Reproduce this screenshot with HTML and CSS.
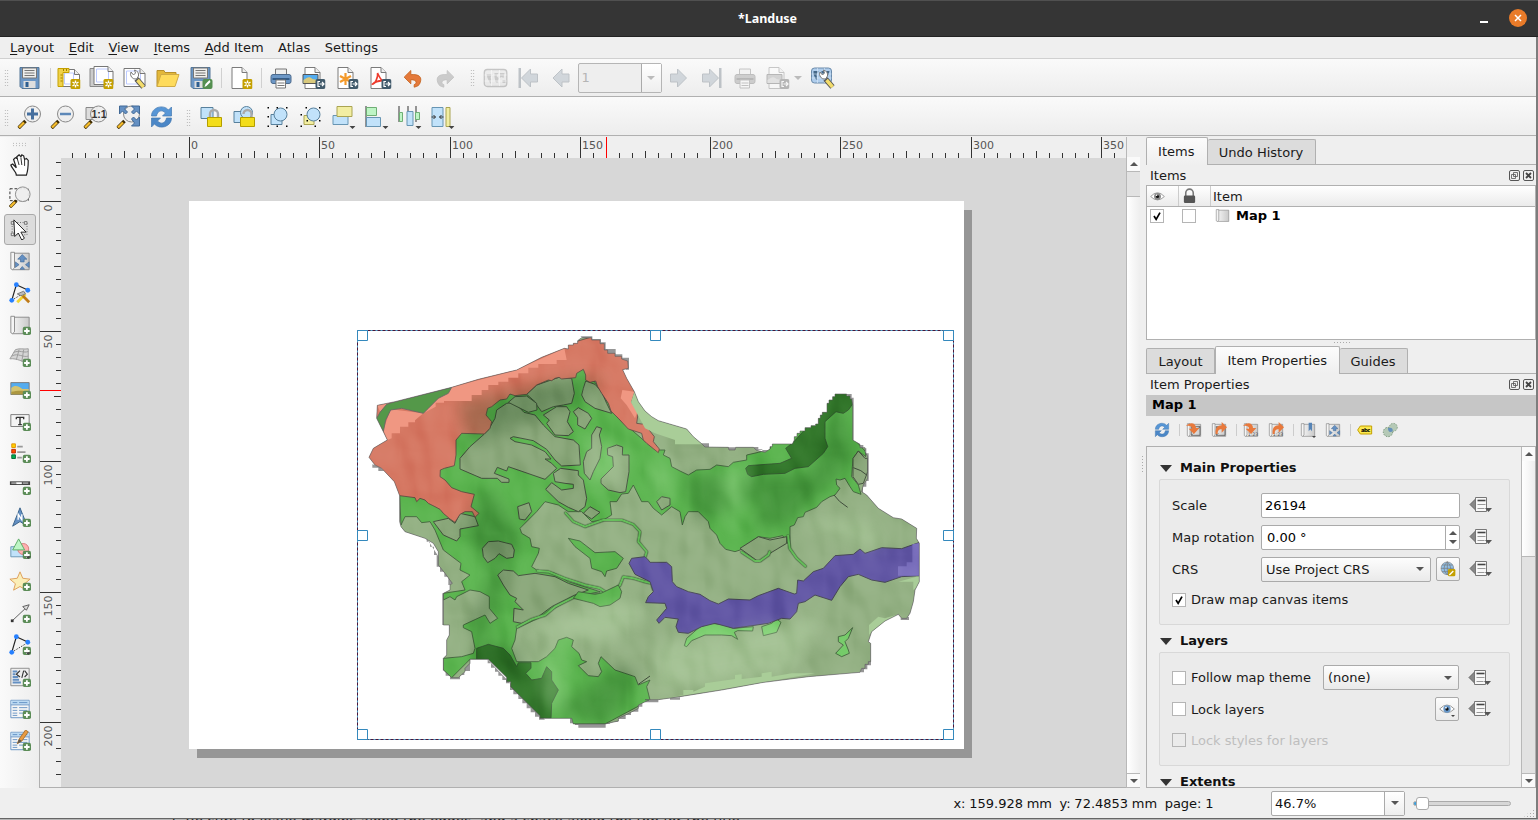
FILE: index.html
```html
<!DOCTYPE html>
<html lang="en">
<head>
<meta charset="utf-8">
<title>*Landuse</title>
<link rel="stylesheet" href="styles.css">
</head>
<body>
<svg class="defs" width="0" height="0">
  <defs>
    <linearGradient id="gray" x1="0" x2="1"><stop offset="0" stop-color="#f4f4f4"/><stop offset="1" stop-color="#c9c9c9"/></linearGradient>
    <symbol id="plus" viewBox="0 0 24 24"><rect x="15" y="14" width="9" height="9" rx="2" fill="#5b8c57"/><path d="M19.500 15.500v6M16.500 18.500h6" stroke="#fff" stroke-width="2"/></symbol>
    <symbol id="new" viewBox="0 0 24 24"><rect x="14" y="13" width="10" height="10" rx="1.500" fill="#c4a000"/><path d="M19 14.500v7M16 16l6 4M22 16l-6 4" stroke="#fff" stroke-width="1.400"/><circle cx="19" cy="18" r="1" fill="#c4a000"/></symbol>
    <symbol id="export" viewBox="0 0 24 24"><rect x="14" y="13" width="10" height="10" rx="2" fill="#415a6b"/><path d="M18.500 15.500h-2v5h2M18 18h4.500M20.500 16l2 2-2 2" fill="none" stroke="#fff" stroke-width="1.200"/></symbol>
    <symbol id="drop" viewBox="0 0 24 24"><path d="M18 21h6l-3 3z" fill="#444"/></symbol>
    <symbol id="doc" viewBox="0 0 24 24"><path d="M3.500 1.500h10l5 5v16h-15z" fill="#fff" stroke="#7b7b7b"/><path d="M13.500 1.500v5h5" fill="#eee" stroke="#7b7b7b"/></symbol>
    <symbol id="save" viewBox="0 0 24 24"><path d="M2.500 1.500h19v21h-17l-2-2z" fill="#6c97c6" stroke="#557797"/><path d="M5 2h14v10H5z" fill="#eeeeec" stroke="#777"/><path d="M7 4.500h10M7 7h10M7 9.500h10" stroke="#777"/><path d="M6 15h12v7H6z" fill="#dedede"/><path d="M8 16h3v5H8z" fill="#2d5e91"/></symbol>
    <symbol id="saveas" viewBox="0 0 24 24"><use href="#save"/><rect x="14" y="13" width="10" height="10" rx="2" fill="#548f50"/><path d="M16 21l1-3 4-4 1 2-4 4z" fill="#fff"/></symbol>
    <symbol id="newlayout" viewBox="0 0 24 24"><path d="M4 3.500h14l5 5v12H4z" fill="#fff" stroke="#777"/><path d="M18 3.500v5h5" fill="#eee" stroke="#777"/><path d="M8 7h9v11H8z" fill="#fff" stroke="#bccaff"/><path d="M1.500 2.500h11v4h-6v14h-5z" fill="#f0d24a" stroke="#c4a000"/><path d="M4 9h2M4 12h2M4 15h2M7 3v2M10 3v2" stroke="#a08000"/><use href="#new"/></symbol>
    <symbol id="duplayout" viewBox="0 0 24 24"><path d="M.5 2.500h14v18H.5z" fill="#ccc" stroke="#888"/><path d="M4.500.5h14l5 5v13h-19z" fill="#fff" stroke="#777"/><path d="M7 3h12v13H7z" fill="none" stroke="#bccaff"/><path d="M18.500.5v5h5" fill="#eee" stroke="#777"/><use href="#new"/></symbol>
    <symbol id="wrench" viewBox="0 0 24 24"><path d="M14 13l7 8" stroke="#555" stroke-width="5.500"/><path d="M15 14l6 7" stroke="#f3dc6b" stroke-width="3.500"/><path d="M8.500 6a5 5 0 0 0 5.500 7l2-3a5 5 0 0 0-4-6l1 3-2 2z" fill="#fff" stroke="#777"/></symbol>
    <symbol id="manager" viewBox="0 0 24 24"><path d="M1.500 2.500h16l5 5v13h-21z" fill="#fff" stroke="#777"/><path d="M4 5h14v13H4z" fill="none" stroke="#bccaff"/><path d="M17.500 2.500v5h5" fill="#eee" stroke="#777"/><use href="#wrench"/></symbol>
    <symbol id="folder" viewBox="0 0 24 24"><path d="M1.500 20.500V4.500h7l1 2h11v4l-3 10z" fill="#e3b83a" stroke="#b8902c"/><path d="M1.500 20.500l4-12h18l-4 12z" fill="#fedb5c" stroke="#d0ab45"/></symbol>
    <symbol id="page" viewBox="0 0 24 24"><use href="#doc"/><use href="#new"/></symbol>
    <symbol id="print" viewBox="0 0 24 24"><path d="M7 3h11v6H7z" fill="#eee" stroke="#777"/><rect x="2.500" y="8.500" width="20" height="9" rx="2" fill="#6c97c6" stroke="#4c6a8d"/><path d="M4 13h17" stroke="#345b85" stroke-width="2"/><path d="M7.500 14h9.500v8H7.500z" fill="#fff" stroke="#777"/><path d="M9 17h7M9 19.500h7" stroke="#777"/></symbol>
    <symbol id="expimg" viewBox="0 0 24 24"><use href="#doc"/><path d="M1.500 8.500h15v9h-15z" fill="#54acef" stroke="#555"/><path d="M2 14c4-3 6-4 9-1l5 1v3H2z" fill="#d9c97c"/><use href="#export"/></symbol>
    <symbol id="expsvg" viewBox="0 0 24 24"><use href="#doc"/><path d="M11 7v12M5.500 10l11 6M16.500 10l-11 6" stroke="#f49a2b" stroke-width="2.200"/><use href="#export"/></symbol>
    <symbol id="exppdf" viewBox="0 0 24 24"><use href="#doc"/><path d="M10 7c3 6 4 8 7 8s-6-2-12 3c2 1 6-7 5-11z" fill="none" stroke="#ef3b2d" stroke-width="1.600"/><use href="#export"/></symbol>
    <symbol id="undo" viewBox="0 0 24 24"><path d="M2 11l8-8v5c10-1 14 3 11 10-1 3-3 4-7 5v-3c4-2 3-6-4-6v5z" fill="#e5793a" stroke="#c4631e"/></symbol>
    <symbol id="world" viewBox="0 0 24 24"><rect x=".8" y="3.500" width="22.500" height="17" rx="3" fill="#d5dde2" stroke="#777" stroke-width="1.300"/><path d="M3 8h6l-2 4 1 1-1 5-3-6zM11 7h4l-2 3 2 2-1 5-2-1-1-5zM16 7h5l-1 5-2-1-2 1zM19 14h3v3h-3z" fill="#888"/><path d="M1 9h22M1 15h22M8 4v16M16 4v16" stroke="#fff" stroke-width=".7"/></symbol>
    <symbol id="worldset" viewBox="0 0 24 24"><rect x="1" y="2" width="20" height="15" rx="3" fill="#afcdec" stroke="#6a8aaa"/><path d="M3 5h5l-2 4 1 5-2-1-2-5zM11 5h4l-2 4-2-2zM16 5h3l-1 4-2-1z" fill="#456888"/><path d="M1 8h20M1 12h20M7 2v15M14 2v15" stroke="#dcebfa" stroke-width=".6"/><use href="#wrench" x="1"/></symbol>
    <symbol id="prev" viewBox="0 0 24 24"><path d="M3.500 12l9-9v5h7v8h-7v5z" fill="#b5bfc8" stroke="#929ba3"/></symbol>
    <symbol id="next" viewBox="0 0 24 24"><path d="M20 12l-9-9v5H4v8h7v5z" fill="#b5bfc8" stroke="#929ba3"/></symbol>
    <symbol id="first" viewBox="0 0 24 24"><path d="M2 2h2.500v20H2z" fill="#929ba3"/><path d="M5 12l9-9v5h7v8h-7v5z" fill="#b5bfc8" stroke="#929ba3"/></symbol>
    <symbol id="last" viewBox="0 0 24 24"><path d="M19.500 2H22v20h-2.500z" fill="#929ba3"/><path d="M19 12l-9-9v5H3v8h7v5z" fill="#b5bfc8" stroke="#929ba3"/></symbol>
    <symbol id="glass" viewBox="0 0 24 24"><path d="M1 23l7-7" stroke="#3d2a00" stroke-width="3.600"/><path d="M1.500 22.500l5-5" stroke="#f5bd2e" stroke-width="2.400"/><circle cx="15" cy="9" r="8" fill="#eee" fill-opacity=".92" stroke="#888"/></symbol>
    <symbol id="zoomin" viewBox="0 0 24 24"><use href="#glass"/><path d="M15 3.500v11M9.500 9h11" stroke="#456f9f" stroke-width="3"/></symbol>
    <symbol id="zoomout" viewBox="0 0 24 24"><use href="#glass"/><path d="M9.500 9h11" stroke="#5d88b8" stroke-width="2.500"/></symbol>
    <symbol id="zoom11" viewBox="0 0 24 24"><path d="M2.500 2.500h11v12h-11z" fill="#ddd" stroke="#888"/><use href="#glass"/><text x="8" y="12.500" font-size="10.500" font-weight="bold" font-family="Liberation Sans, sans-serif" fill="#333">1:1</text></symbol>
    <symbol id="zoomfull" viewBox="0 0 24 24"><use href="#glass"/><path d="M3 1h8l-3 3 3 3-2 2-3-3-3 3zM23 1h-8l3 3-3 3 2 2 3-3 3 3zM23 21h-8l3-3-3-4 2-2 3 3 3-3z" fill="#6490c3" stroke="#416996"/></symbol>
    <symbol id="refresh" viewBox="0 0 24 24"><path d="M2 11c0-9 12-12 17-6l3-3v9h-9l3-3c-4-4-8-2-9 3z" fill="#5796d6" stroke="#4378b0" stroke-width=".7"/><path d="M22 13c0 9-12 12-17 6l-3 3v-9h9l-3 3c4 4 8 2 9-3z" fill="#4b87c7" stroke="#4378b0" stroke-width=".7"/></symbol>
    <symbol id="lock" viewBox="0 0 24 24"><path d="M1.500 2.500h12v11h-12z" fill="#c1e2fa" stroke="#57809c"/><path d="M10.500 14V9a4 4 0 0 1 8 0v5" fill="none" stroke="#aaa" stroke-width="2.400"/><path d="M8 12.500h14v9H8z" fill="#f3dd19" stroke="#b49e00"/></symbol>
    <symbol id="unlock" viewBox="0 0 24 24"><path d="M1.500 6.500h11v11h-11z" fill="#c1e2fa" stroke="#57809c"/><circle cx="14" cy="7.500" r="6" fill="#c1e2fa" stroke="#57809c"/><path d="M11 9a4 4 0 0 1 8 0v4" fill="none" stroke="#aaa" stroke-width="2.400"/><path d="M8 12.500h14v9H8z" fill="#f3dd19" stroke="#b49e00"/></symbol>
    <symbol id="group" viewBox="0 0 24 24"><path d="M5.500 9.500h11v10h-11z" fill="#c1e2fa" stroke="#57809c"/><circle cx="15" cy="9.500" r="6.500" fill="#c1e2fa" stroke="#57809c"/><path d="M2 2h1.500v1.500H2zM11 2h1.500v1.500H11zM20.500 2H22v1.500h-1.500zM2 11h1.500v1.500H2zM2 20.500h1.500V22H2zM11 20.500h1.500V22H11zM20.500 20.500H22V22h-1.500z"/></symbol>
    <symbol id="ungroup" viewBox="0 0 24 24"><path d="M5.500 10.500h10v9h-10z" fill="#f2eea2" stroke="#aaa452"/><circle cx="15" cy="9.500" r="6.500" fill="#c1e2fa" stroke="#57809c"/><path d="M7 2h1.500v1.500H7zM20.500 2H22v1.500h-1.500zM2 9h1.500v1.500H2zM20.500 15H22v1.500h-1.500zM2 20.500h1.500V22H2zM16 20.500h1.500V22H16zM8 15h1.500v1.500H8z"/></symbol>
    <symbol id="raise" viewBox="0 0 24 24"><path d="M1.500 10.500h15v9h-15z" fill="#c1e2fa" stroke="#6795b3"/><path d="M5.500 1.500h15v10h-15z" fill="#f2eea2" stroke="#aaa452"/><use href="#drop"/></symbol>
    <symbol id="align" viewBox="0 0 24 24"><path d="M1.500 1v21" stroke="#333"/><path d="M2 2.500h10v8H2z" fill="#bef5c5" stroke="#6fae75"/><path d="M2 12.500h14v9H2z" fill="#c1e2fa" stroke="#6795b3"/><use href="#drop"/></symbol>
    <symbol id="distribute" viewBox="0 0 24 24"><path d="M1.500 1v16M10.500 1v20M18.500 1v16" stroke="#333"/><path d="M2 7.500h3v9H2zM18 7.500h4v7h-4z" fill="#bef5c5" stroke="#6fae75"/><path d="M9.500 6.500h6v14h-6z" fill="#c1e2fa" stroke="#6795b3"/><use href="#drop"/></symbol>
    <symbol id="resize" viewBox="0 0 24 24"><path d="M1.500 2.500h11v19h-11z" fill="#c1e2fa" stroke="#6795b3"/><path d="M15.500 2.500h4v19h-4z" fill="#f2eea2" stroke="#aaa452"/><path d="M1 12h4l-2-2M5 12l-2 2M13 12H9l2-2M9 12l2 2" fill="none" stroke="#333"/><use href="#drop"/></symbol>
    <symbol id="hand" viewBox="0 0 24 24"><path d="M8 23c0-4-5-7-6-11l2-1 4 4-3-9 2-2 2 1-.5-2L11 1l2 2 1-2 2 1 1 4 2-1 2 2c0 6 0 10-2 16z" fill="#fff" stroke="#222" stroke-width="1.300"/><path d="M9 5l2 7M13 4l1 8M17 6v7" stroke="#222"/></symbol>
    <symbol id="zoomtool" viewBox="0 0 24 24"><path d="M1 3h20v13H1z" fill="none" stroke="#222" stroke-dasharray="3 2"/><use href="#glass"/></symbol>
    <symbol id="select" viewBox="0 0 24 24"><path d="M3 4h17v14H3z" fill="none" stroke="#555" stroke-dasharray="1 2"/><path d="M2 3h3v3H2zM17 3h3v3h-3zM2 16h3v3H2z" fill="#eee" stroke="#666"/><path d="M5 1l14 14h-6l4 7-3 2-4-8-4 4z" fill="#fff" stroke="#111"/></symbol>
    <symbol id="scroll" viewBox="0 0 24 24"><path d="M4 3.500h18v18H4z" fill="url(#gray)" stroke="#888"/><path d="M2 2.500h4v17l-2 2-2-1z" fill="#f5f5f5" stroke="#888"/></symbol>
    <symbol id="movecontent" viewBox="0 0 24 24"><use href="#scroll"/><path d="M14.500 5l5 5h-3v3h-4v-3h-3zM7 13l4 3-4 3zM22 13l-4 3 4 3zM12 21h5l-2.500-3z" fill="#6490c3" stroke="#416996" stroke-width=".7"/></symbol>
    <symbol id="nodes" viewBox="0 0 24 24"><path d="M3 20L8 3l13 6" fill="none" stroke="#222" stroke-width="1.300"/><path d="M3 20l18-11" stroke="#222" stroke-dasharray="1.500 1.500"/><g fill="#2680ff"><circle cx="8" cy="3" r="2.600"/><circle cx="20.500" cy="9" r="2.600"/><circle cx="3" cy="20" r="2.600"/></g></symbol>
    <symbol id="editnodes" viewBox="0 0 24 24"><use href="#nodes"/><path d="M9 22l9-9" stroke="#f1d431" stroke-width="3"/><path d="M15 15l7 7" stroke="#c07b17" stroke-width="3"/><path d="M9 13l7-3 2 3-5 2z" fill="#bbb" stroke="#777"/></symbol>
    <symbol id="addmap" viewBox="0 0 24 24"><use href="#scroll"/><use href="#plus"/></symbol>
    <symbol id="add3d" viewBox="0 0 24 24"><path d="M1 14L7 4c5-2 9 0 14-1v15c-6 0-12-5-20-4z" fill="#d5d5d5" stroke="#999"/><path d="M3 11c7-4 12 2 18 0M5 7c7-3 11 1 16-1M11 4l-3 11M16 4l-2 13" stroke="#999" fill="none"/><use href="#plus"/></symbol>
    <symbol id="addpic" viewBox="0 0 24 24"><path d="M2 5h20v13H2z" fill="#54acef" stroke="#777"/><path d="M2.500 11c4-4 8-2 12 1h7v5.500h-19z" fill="#d4c36f"/><path d="M2.500 15c6-1 11-2 19 0v3h-19z" fill="#ac9740"/><use href="#plus"/></symbol>
    <symbol id="addlabel" viewBox="0 0 24 24"><path d="M2 5h20v13H2z" fill="#f5f5f5" stroke="#777"/><path d="M8 8h8v2M8 10V8M12 8v8M10 16h4" fill="none" stroke="#333" stroke-width="1.500"/><use href="#plus"/></symbol>
    <symbol id="addlegend" viewBox="0 0 24 24"><path d="M3 2h4v4H3z" fill="#ffd000" stroke="#e09100"/><path d="M3 8h4v4H3z" fill="#ff4c00" stroke="#b92600"/><path d="M3 14h4v4H3z" fill="#00b052" stroke="#006633"/><path d="M9 5h6M9 11h9M9 17h5" stroke="#999" stroke-width="2"/><use href="#plus"/></symbol>
    <symbol id="addscale" viewBox="0 0 24 24"><path d="M1 8h22v4H1z" fill="#444"/><path d="M2.500 10h6M15 10h6" stroke="#999" stroke-width="2"/><path d="M8 10h6" stroke="#fff" stroke-width="2"/><use href="#plus"/></symbol>
    <symbol id="addnorth" viewBox="0 0 24 24"><path d="M12 2l8 20-8-5-8 5z" fill="#6490c3" stroke="#355e85"/><path d="M10 15V9l4 6V9" fill="none" stroke="#fff" stroke-width="1.500"/><use href="#plus"/></symbol>
    <symbol id="addshape" viewBox="0 0 24 24"><path d="M2 9.500h14v11H2z" fill="#c1e2fa" stroke="#6795b3"/><circle cx="15.500" cy="12" r="6" fill="#ffb0b0" stroke="#d77979"/><path d="M10.500 1L17 13H4z" fill="#bef5c5" stroke="#58a861"/><use href="#plus"/><use href="#drop" y="-1"/></symbol>
    <symbol id="addstar" viewBox="0 0 24 24"><path d="M12 2l3 7 8 1-6 5 2 7-7-4-7 4 2-7-6-5 8-1z" fill="#fbeeb7" stroke="#dc9b54"/><use href="#plus"/></symbol>
    <symbol id="addarrow" viewBox="0 0 24 24"><path d="M3 21L20 5" stroke="#555"/><path d="M22 3l-3 6-4-4z" fill="#ddd" stroke="#555"/><path d="M2 19h3v3H2z" fill="#333"/><use href="#plus"/></symbol>
    <symbol id="addnodes" viewBox="0 0 24 24"><use href="#nodes"/><use href="#plus"/><use href="#drop" y="-1"/></symbol>
    <symbol id="addhtml" viewBox="0 0 24 24"><path d="M2 2.500h20v19H2z" fill="#eee" stroke="#888"/><path d="M4 6h5M4 9h3M4 12h6M4 15h7M4 18h9" stroke="#6490c3" stroke-width="2"/><path d="M12 5L8 9l4 3M16 5l-2 8M17 5l3 4-3 3" fill="none" stroke="#333" stroke-width="1.200"/><use href="#plus"/></symbol>
    <symbol id="addtable" viewBox="0 0 24 24"><path d="M2 2.500h20v19H2z" fill="#f6f6f6" stroke="#6490c3"/><path d="M2.500 3h19v4h-19z" fill="#bbdaf3"/><path d="M2 7.500h20M4 10.500h5M11 10.500h9M4 13.500h5M11 13.500h9M4 16.500h5M11 16.500h9M4 19h5M4 5h5M11 5h9" stroke="#6490c3"/><use href="#plus"/></symbol>
    <symbol id="addmanual" viewBox="0 0 24 24"><use href="#addtable"/><path d="M9 15l2-5 7-10 3 2-7 10z" fill="#e89b43" stroke="#aa702b"/><path d="M9 15l2-5 3 2z" fill="#555"/></symbol>
    <symbol id="eye" viewBox="0 0 24 24"><path d="M1 12Q12 0 23 12Q12 23 1 12z" fill="#fff" stroke="#999" stroke-width="1.500"/><circle cx="12" cy="12" r="5.500" fill="currentColor"/><circle cx="12" cy="12" r="2.500" fill="#111"/><circle cx="10.500" cy="10" r="1.300" fill="#fff"/></symbol>
    <symbol id="padlock" viewBox="0 0 24 24"><path d="M6 12V7a6 6 0 0 1 12 0v5" fill="none" stroke="#777" stroke-width="2.500"/><rect x="3" y="11" width="18" height="12" rx="2" fill="#555"/></symbol>
    <symbol id="viewset" viewBox="0 0 24 24"><use href="#scroll"/><path d="M8 7h13v13H8zM8 7l3 3M21 7l-3 3M8 20l3-3" fill="none" stroke="#444"/></symbol>
    <symbol id="scaleset" viewBox="0 0 24 24"><use href="#scroll"/><text x="7" y="21" font-size="7" textLength="16" fill="#555">1:23</text></symbol>
    <symbol id="downarrow" viewBox="0 0 24 24"><path d="M0 6c6-7 15-5 15 3h5l-8 9-8-8h5c0-4-4-5-9-4z" fill="#e8793c"/></symbol>
    <symbol id="uparrow" viewBox="0 0 24 24"><path d="M7 18C6 9 10 5 16 5V0l8 8-8 8v-5c-5 0-6 3-6 7z" fill="#e8793c"/></symbol>
    <symbol id="bookmark" viewBox="0 0 24 24"><use href="#scroll"/><path d="M13 1h5v13l-2.500-3-2.500 3z" fill="#5684b6"/><use href="#drop"/></symbol>
    <symbol id="abc" viewBox="0 0 24 24"><path d="M1 12l4-6h17v12H5z" fill="#fce94f" stroke="#c4a000" stroke-width="1.500"/><text x="6" y="15" font-size="8" font-weight="bold" textLength="14">abc</text></symbol>
    <symbol id="clip" viewBox="0 0 24 24"><circle cx="9" cy="15" r="7" fill="#b5c9b6" stroke="#6c8c6e" stroke-width="1.500" stroke-dasharray="2 2"/><circle cx="17" cy="8" r="6" fill="#b5c9b6" stroke="#6c8c6e" stroke-dasharray="2 2"/><path d="M9 9q8-2 7 5-7 3-7-5z" fill="#6490ba"/></symbol>
    <symbol id="globe" viewBox="0 0 24 24"><circle cx="11" cy="11" r="9.500" fill="#91c0e8" stroke="#888"/><path d="M1.500 11h19M3 6h16M3 16h16M11 1v20M11 1q-10 10 0 20M11 1q10 10 0 20" fill="none" stroke="#777"/><rect x="12" y="12" width="11" height="11" rx="2" fill="#c4a000"/><path d="M14 21l6-6" stroke="#fff" stroke-width="2"/></symbol>
    <symbol id="dd" viewBox="0 0 24 18"><path d="M1 8.500L6.500 3v11z" fill="#888" stroke="#666"/><path d="M6.500 1.500h11v14h-11z" fill="#f8f8f8" stroke="#777"/><path d="M8.500 4.500h8" stroke="#444" stroke-width="1.600"/><path d="M8.500 8.500h8M8.500 12.500h7" stroke="#999"/><path d="M16 12h7l-3.500 4z" fill="#555"/></symbol>
    <symbol id="float" viewBox="0 0 11 11"><rect x=".5" y=".5" width="10" height="10" rx="1.500" fill="none" stroke="#555"/><path d="M4.500 2.500h4v4h-4zM2.500 4.500h4v4h-4z" fill="#eee" stroke="#555" stroke-width=".8"/></symbol>
    <symbol id="close" viewBox="0 0 11 11"><rect x=".5" y=".5" width="10" height="10" rx="1.500" fill="none" stroke="#555"/><path d="M3 3l5 5M8 3L3 8" stroke="#444" stroke-width="1.800"/></symbol>
    <symbol id="tick" viewBox="0 0 14 14"><path d="M3.500 7l2.500 4 4.500-8" fill="none" stroke="#000" stroke-width="2"/></symbol>
  </defs>
</svg>
<div class="window">
  <header class="title"><span class="title-text">*Landuse</span><i class="minimize"></i><svg class="quit" viewBox="0 0 18 18"><circle cx="9" cy="9" r="9" fill="#e97b29"/><path d="M6 6l6 6M12 6l-6 6" stroke="#fff" stroke-width="1.500"/></svg></header>
  <nav class="menu"><span><u>L</u>ayout</span><span><u>E</u>dit</span><span><u>V</u>iew</span><span><u>I</u>tems</span><span><u>A</u>dd Item</span><span>Atlas</span><span>Settings</span></nav>
  <div class="toolbar">
    <i class="grip"></i><svg class="ic"><use href="#save"/></svg><i class="sep"></i><svg class="ic"><use href="#newlayout"/></svg><svg class="ic"><use href="#duplayout"/></svg><svg class="ic"><use href="#manager"/></svg><svg class="ic"><use href="#folder"/></svg><svg class="ic"><use href="#saveas"/></svg><i class="sep"></i><svg class="ic"><use href="#page"/></svg><i class="sep"></i><svg class="ic"><use href="#print"/></svg><svg class="ic"><use href="#expimg"/></svg><svg class="ic"><use href="#expsvg"/></svg><svg class="ic"><use href="#exppdf"/></svg><svg class="ic small"><use href="#undo"/></svg><svg class="ic off small flip"><use href="#undo"/></svg>
    <i class="grip second"></i><svg class="ic off"><use href="#world"/></svg><svg class="ic pale"><use href="#first"/></svg><svg class="ic pale"><use href="#prev"/></svg><div class="combo atlas"><span>1</span><b class="arrow"></b></div><svg class="ic pale"><use href="#next"/></svg><svg class="ic pale"><use href="#last"/></svg><svg class="ic off"><use href="#print"/></svg><svg class="ic off"><use href="#expimg"/></svg><i class="mini"></i><svg class="ic"><use href="#worldset"/></svg>
  </div>
  <div class="toolbar lower">
    <i class="grip"></i><svg class="ic"><use href="#zoomin"/></svg><svg class="ic"><use href="#zoomout"/></svg><svg class="ic"><use href="#zoom11"/></svg><svg class="ic"><use href="#zoomfull"/></svg><svg class="ic"><use href="#refresh"/></svg><i class="grip second"></i><svg class="ic"><use href="#lock"/></svg><svg class="ic"><use href="#unlock"/></svg><svg class="ic"><use href="#group"/></svg><svg class="ic"><use href="#ungroup"/></svg><svg class="ic"><use href="#raise"/></svg><svg class="ic"><use href="#align"/></svg><svg class="ic"><use href="#distribute"/></svg><svg class="ic"><use href="#resize"/></svg>
  </div>
  <main class="main">
    <aside class="tools"><i class="hgrip"></i><svg><use href="#hand"/></svg><svg><use href="#zoomtool"/></svg><svg class="active"><use href="#select"/></svg><svg><use href="#movecontent"/></svg><svg><use href="#editnodes"/></svg><svg><use href="#addmap"/></svg><svg><use href="#add3d"/></svg><svg><use href="#addpic"/></svg><svg><use href="#addlabel"/></svg><svg><use href="#addlegend"/></svg><svg><use href="#addscale"/></svg><svg><use href="#addnorth"/></svg><svg><use href="#addshape"/></svg><svg><use href="#addstar"/></svg><svg><use href="#addarrow"/></svg><svg><use href="#addnodes"/></svg><svg><use href="#addhtml"/></svg><svg><use href="#addtable"/></svg><svg><use href="#addmanual"/></svg></aside>
    <section class="view">
      <svg class="ruler-h" id="rulerH" viewBox="40 137 1086 21"></svg>
      <svg class="ruler-v" id="rulerV" viewBox="40 158 21 629"></svg>
      <div class="canvas"><div class="sheet"></div>
<svg class="map" viewBox="0 0 1806 1257">
<defs>
<path id="sil" d="M67 241L120 230L290 187L370 163L485 135L560 97L628 70L640 72V60H655V55H668V47L680 38H710V45H735V56H748V75H758V85H780V94H800V102L818 108L820 130L803 134L815 160L838 200L850 230L870 258L890 275L910 287L995 312L1015 335L1042 358L1050 366L1120 367L1122 375H1140L1142 367H1195L1205 376L1230 382L1245 372V365H1252V357H1312L1318 345V335H1326V325H1335V318H1350V308H1368V302H1382V297H1390V280H1396V270H1402V262H1416V235H1422V225H1433V215H1440V207H1475V213H1485V222H1490L1493 240V345L1515 358V368H1530V380L1538 395V460L1525 480L1520 500L1535 510L1570 550L1615 578L1640 582L1685 610L1684 640L1693 655V770L1680 795L1675 830L1665 865L1655 880H1640L1630 868L1590 888L1550 920L1540 950L1547 955V1010H1540V1018H1530V1030H1520L1515 1042L1360 1055L1220 1073L1100 1095L975 1115L910 1124H870L882 1125L850 1140V1150L828 1162L790 1180V1188L750 1197H655L650 1180H555V1172L467 1085V1070H455V1057L400 1003H345V1015L330 1030V1040L310 1058H290L265 1035V1000L275 990V945L283 930V900H265V805L285 795V780L292 775L270 745L250 720V680L235 655L210 640L150 620L138 605L134 590V512L118 470L80 430L60 420L42 397L55 370L75 358L97 345L85 320L65 280Z"/>
<clipPath id="land"><use href="#sil"/></clipPath>
<filter id="relief" x="0" y="0" width="1" height="1" color-interpolation-filters="sRGB"><feTurbulence type="fractalNoise" baseFrequency=".011 .008" numOctaves="2" seed="7"/><feDiffuseLighting surfaceScale="30" diffuseConstant=".64" lighting-color="#fff"><feDistantLight azimuth="315" elevation="52"/></feDiffuseLighting></filter>
<filter id="soft" color-interpolation-filters="sRGB"><feGaussianBlur stdDeviation="22"/></filter>
</defs>
<path fill="#969696" d="M676 34H712V42H738V52H752V72H782V88H802V98H822V134H812V120H800ZM1040 355H1062V367H1040ZM1112 367H1142V379H1112ZM1195 366H1210V373H1222V385H1248V375H1200ZM1475 207H1490V218H1496V345H1484V225ZM1515 350V360H1525V370H1534V385H1541V468H1534V485H1524V505H1512ZM262 900H270V805H262ZM262 1038H272V1052H285V1063H315V1050H328V1038H345V1010H335ZM398 1003V1015H408V1028H420V1040H430V1052H442V1065H453V1075H465V1095H475V1108H490V1122H502V1135H515V1150H527V1162H540V1175H552V1184H570ZM645 1180V1195H660V1200H670V1208H752V1196H765V1190H790V1182H812V1170H828V1160H850V1145H862V1130H800ZM215 640V650H225V665H237V690H245V725H255V740H268V755H280V780H295L280 740ZM870 1125V1132H910V1125ZM945 1119V1124H975V1117ZM1515 1042H1527V1033H1537V1021H1548V1005H1530ZM1637 878V885H1662V876ZM52 418V428H70V438H88L75 425Z"/>
<use href="#sil" fill="#999"/>
<g clip-path="url(#land)">
<use href="#sil" fill="#94b184"/>
<path class="bright" d="M134 512L200 400L400 240L600 140L693 130L760 235L790 280L865 345L905 375L930 375L925 390L945 400L950 425L975 438L1000 450L1025 435L1065 433L1085 420L1120 425L1135 412L1175 405L1175 390L1210 382L1245 372L1252 350L1500 200V345L1532 380V395L1510 378L1495 400L1492 425L1490 455L1510 480L1518 508L1495 500L1485 485L1470 460L1455 465L1443 462L1445 480L1455 490L1440 510L1425 515L1400 530L1385 547L1350 562L1345 575L1328 578L1318 600L1305 605V665L1283 632L1245 640L1210 635L1155 675L1140 680L1112 673L1095 655L1085 630L1065 610L1060 590L1030 560L1000 560L990 575L982 600L975 560L950 545L920 570L895 550L880 530L860 530L835 480L820 505L800 507L785 530L765 530L770 570L745 585L710 590L680 560L640 560L610 540L570 530L545 560L495 610L500 625L525 640L530 665L553 670L550 685L530 725L545 735L600 745L640 770L735 800L660 815L590 855L550 880L485 910L480 945L470 970L485 1010L550 1010L575 995L600 970L610 945L635 937L655 945L650 965L672 985L680 1005L695 1010L670 1022L700 1052L730 1055L740 1040L730 1015L738 995L780 1035L840 1055L850 1080L885 1065L875 1085L885 1125L750 1197H655L555 1180L467 1085L400 1003H345L290 1058L265 1035V1000L320 995L355 985L360 970L350 920L325 908L325 900L390 870L405 895L428 880L403 850V815L375 800L345 795L305 815L300 825L285 815L265 825V805L330 795L320 770L345 750L315 735L318 715L265 675L240 615L225 590L200 593L185 575L150 575L138 600Z"/>
<g class="sage">
<path d="M315 400L345 365L387 328L400 315L420 280L425 255L455 235L478 232L507 262L540 270L565 300L600 335L655 345L672 360L676 420L620 423L600 405L575 373L535 347L475 335L465 340L480 350L530 360L570 380L588 402H570L590 415L605 430L570 463L460 425L455 438L427 427L418 445L462 462V472L440 472L427 460H380L315 432Z"/>
<path d="M515 208L545 180L612 157L650 160L658 205L650 235L625 240L595 245L560 260L545 240L540 230Z"/>
<path d="M460 232L480 215L515 213L545 235L546 255L520 262Z"/><path d="M565 270L605 245L635 245L645 260L637 290L655 320L640 332L600 330L575 295L583 285Z"/>
<path d="M655 260L670 248L700 265L710 280L690 312L668 300V278Z"/><path d="M685 190L692 168L720 178L740 200L755 235L770 265L720 250L690 230L680 210Z"/>
<path d="M710 330L725 305L740 310L733 330L740 365L735 400L715 440L705 465L688 445L685 410L695 380L710 370Z"/>
<path d="M757 370L785 360L803 366L802 390L822 390V440L812 500L795 503L760 495L738 475V462L775 425L773 395L758 390Z"/>
<path d="M595 445L617 430L670 437V450L685 465L695 520L690 545L670 560L640 547L610 530L572 493L590 473L620 495L655 490V478L630 475L600 470Z"/>
<path d="M488 545L522 533L530 560L510 585L493 582ZM685 565L705 545L735 562L710 582Z"/>
<path d="M382 670L400 650L430 648L470 658L478 675L475 697L455 700L432 686L420 700L398 713L385 695Z"/>
<path d="M428 750L445 735L475 738L490 752L540 745L600 755L640 775L700 795L660 810L590 845L550 875L500 895L475 890L477 850L505 855L480 830L485 820L465 810L445 780Z"/>
<path d="M235 590L280 580L300 595L315 565L360 575L370 602L315 612V635L305 648L265 630Z"/>
<path d="M905 530L920 515L945 520V540L920 555ZM1155 670L1210 635L1245 645L1295 635V655L1245 685L1210 710Z"/>
<path d="M1494 400L1510 378L1530 400L1538 400V440L1525 475L1510 478L1494 455Z"/>
</g>
<g class="river"><path d="M630 562L655 590L690 605L745 585L800 585L835 598L855 620L850 650L875 680L870 697"/><path d="M545 737L580 740L630 760L690 780L735 790L750 800"/><path d="M485 907L530 883L570 870L600 845L660 815L740 808"/><path d="M735 803L765 810L795 780L805 755L835 760L870 770L890 775L895 795"/><path d="M1158 680L1200 708L1215 708L1240 690L1245 678"/><path d="M1299 630L1304 670L1325 700L1353 725"/></g>
<g class="bright"><path d="M640 640L675 648L720 683L780 680L805 700L785 730L755 738L750 755L740 740L710 730L705 700L660 665Z"/><path d="M670 800L720 808L740 804L790 780L800 800L795 820L765 840L735 845L715 835L655 820Z"/><path class="pale-green" d="M988 962L995 940L1035 905L1070 895L1110 900L1135 910L1195 905L1193 918L1148 917L1138 922L1148 943L1130 932L1100 930L1050 930L1010 947L995 965Z"/><path class="pale-green" d="M1220 905L1250 895L1265 882L1278 892L1265 922L1225 932Z"/><path class="pale-green" d="M1493 908L1480 940L1470 950L1480 975L1483 985L1460 995L1442 985L1465 960L1450 950V935L1470 930Z"/></g>
<path class="purple" d="M822 715L830 700L870 695L880 705L885 712L935 712L950 725L952 770L965 785L1000 800L1035 808L1065 827L1090 837L1120 822L1185 825L1210 812L1270 790L1318 807L1325 805L1328 765L1345 768L1375 740L1405 730L1440 692L1495 688L1515 672L1530 685L1580 668L1640 671L1694 652V752L1640 755L1590 772L1550 765L1510 748L1480 755L1455 785L1430 826L1380 810L1350 830L1330 835L1325 860L1305 882L1280 880L1240 895L1135 910L1080 895L1040 905L1000 925L970 922L963 905L970 882L930 877L912 895L905 885L935 850L930 835L872 833L880 815L895 800L885 770L840 748Z"/>
<path fill="#7b70bd" d="M1672 658L1693 654V752H1629V724H1655V712H1672Z"/>
<path class="dark" d="M1493 237L1480 255L1465 265L1455 263L1443 260L1410 290V340L1418 365L1405 385L1360 425L1320 430L1290 445L1225 448L1190 455L1178 448L1172 430L1180 422L1275 415L1310 400L1292 370L1315 352L1380 280L1440 190H1500ZM365 970L400 958L445 970L465 990L485 1025L490 1013H528V1030L512 1045L530 1065L560 1060L575 1025L590 1040L590 1065L610 1095L590 1135L588 1180H555L467 1085L400 1003H365Z"/>
<path class="red" d="M60 235L628 60L730 30L830 100L838 200L828 232L850 260L845 295L860 297L872 295L880 312L898 335L895 350L913 372L910 383L875 355L865 345L860 325L820 312L790 280L768 258L760 235L740 205L728 185L722 168L705 172L692 165V150L685 133L665 145L662 158L620 162L612 157L600 160L590 167L580 165L545 180L515 208L480 212L465 207L455 222L435 225L410 245L398 250L393 270L410 290L405 310L388 327L320 325L303 345V390L298 422L268 430L256 435L255 455L270 465L290 488L320 500L358 508L348 545L372 565L360 577L352 560L330 560L315 568L300 592L285 582L265 565L255 553L240 545L220 535L210 525L195 520L185 530L180 518L134 512L20 430L40 350Z"/>
<g filter="url(#soft)" opacity=".22"><path d="M310 230L660 160L750 160L660 240L340 360ZM1450 200L1500 400L1300 600L1200 610L1210 520L1030 590L980 450L1370 440ZM390 480L510 640L420 750L330 620ZM370 940L500 980L480 1080L350 1000ZM590 1160L790 1020L860 1040L760 1200ZM470 720L390 940L340 920L400 760Z" fill="#003000"/><path d="M700 330L820 390L800 480L700 490ZM540 1000L640 930L620 1170L560 1120ZM500 920L780 820L880 860L760 950ZM1300 580L1590 680L1540 590ZM1100 430L1180 430L1130 630ZM880 390L940 440L960 530L890 510ZM900 960L1400 880L1300 1040L900 1100Z" fill="#dfffd0"/></g>
<rect class="shade" width="1806" height="1257" filter="url(#relief)"/>
<path class="lit" d="M290 187L485 135L628 70L635 105H605V117H550V128H520V145H490V158H460V170H430V180H400V195H380V210H350V228H267V233H242V245L205 265L250 220ZM67 241L105 232L75 260ZM85 315L107 253L205 265L180 286V292H160V305H135V325H110V340L97 345ZM802 195L838 200L828 232L848 258L840 280L815 240L797 220Z"/>
<path fill="#a9cd98" d="M838 200L870 258L910 287L995 312L1042 358H960V345L900 325L870 310L828 232ZM1684 755H1694L1690 785L1675 795V770H1630ZM1590 880L1630 868L1550 920L1542 930V900L1570 875ZM910 1124L985 1110V1095H1015V1100L1050 1085V1075L1140 1062V1050L1160 1048V1062L1220 1055V1045L1250 1040V1055L1310 1045L1380 1045L1220 1073Z"/>
<path fill="#549849" stroke="#666" stroke-width="2.500" d="M290 187L120 230L95 238L75 262L64 282L85 320L92 285L107 255L140 250L205 265L220 250L250 220L280 205Z"/>
</g>
<use href="#sil" fill="none" stroke="#555" stroke-opacity=".55" stroke-width="3"/>
<path fill="none" stroke="#3f4c3b" stroke-width="3" d="M1437 510Q1450 530 1478 547M1495 428Q1520 435 1535 450M850 1078L885 1053"/>
</svg>
<svg class="selection" viewBox="357 330 598 411"><path d="M357.500 330.500h596v409h-596z" fill="none" stroke="#4da3cc"/><path d="M357.500 330.500h596v409h-596z" fill="none" stroke="#4d1538" stroke-dasharray="3 2"/><path d="M357.500 330.500h10v10h-10zM650.500 330.500h10v10h-10zM943.500 330.500h10v10h-10zM357.500 530.500h10v10h-10zM943.500 530.500h10v10h-10zM357.500 729.500h10v10h-10zM650.500 729.500h10v10h-10zM943.500 729.500h10v10h-10z" fill="#fff" stroke="#3489bd"/></svg>
      </div>
    </section>
    <div class="vscroll outer"><b class="up"></b><i class="groove"></i><i class="thumb"></i><b class="down"></b></div>
    <div class="split"></div>
    <section class="panel">
      <div class="tabs"><span class="tab on t1">Items</span><span class="tab t2">Undo History</span></div>
      <div class="dock"><span>Items</span><svg><use href="#float"/></svg><svg><use href="#close"/></svg></div>
      <div class="tree"><div class="row head"><span><svg class="eye16"><use href="#eye"/></svg></span><span><svg class="lock16"><use href="#padlock"/></svg></span><span>Item</span></div><div class="row body"><span><svg class="box"><use href="#tick"/></svg></span><span><i class="box"></i></span><span class="name"><svg><use href="#scroll"/></svg><strong>Map 1</strong></span></div></div>
      <div class="hsplit"></div>
      <div class="tabs"><span class="tab t3">Layout</span><span class="tab on t4">Item Properties</span><span class="tab t5">Guides</span></div>
      <div class="dock"><span>Item Properties</span><svg><use href="#float"/></svg><svg><use href="#close"/></svg></div>
      <div class="band">Map 1</div>
      <div class="mapbar"><svg><use href="#refresh"/></svg><i></i><svg viewBox="0 0 24 24"><use href="#viewset"/><use href="#downarrow"/></svg><svg viewBox="0 0 24 24"><use href="#viewset"/><use href="#uparrow"/></svg><i></i><svg viewBox="0 0 24 24"><use href="#scaleset"/><use href="#downarrow"/></svg><svg viewBox="0 0 24 24"><use href="#scaleset"/><use href="#uparrow"/></svg><i></i><svg><use href="#bookmark"/></svg><svg><use href="#movecontent"/></svg><i></i><svg><use href="#abc"/></svg><svg><use href="#clip"/></svg></div>
      <div class="props">
        <div class="form">
          <h2>Main Properties</h2>
          <div class="group main-group">
            <div class="line"><label>Scale</label><div class="field">26194</div><svg class="dd"><use href="#dd"/></svg></div>
            <div class="line"><label>Map rotation</label><div class="field spin">0.00 °<span><b class="arrow upw"></b><b class="arrow"></b></span></div><svg class="dd"><use href="#dd"/></svg></div>
            <div class="line"><label>CRS</label><div class="select">Use Project CRS<b class="arrow"></b></div><div class="btn"><svg><use href="#globe"/></svg></div><svg class="dd"><use href="#dd"/></svg></div>
            <div class="line check"><svg class="box"><use href="#tick"/></svg><span>Draw map canvas items</span></div>
          </div>
          <h2>Layers</h2>
          <div class="group layer-group">
            <div class="line"><i class="box"></i><span class="grow">Follow map theme</span><div class="select theme">(none)<b class="arrow"></b></div><svg class="dd"><use href="#dd"/></svg></div>
            <div class="line"><i class="box"></i><span class="grow">Lock layers</span><div class="btn"><svg viewBox="0 0 24 24"><use href="#eye"/><use href="#drop"/></svg></div><svg class="dd"><use href="#dd"/></svg></div>
            <div class="line disabled"><i class="box"></i><span>Lock styles for layers</span></div>
          </div>
          <h2>Extents</h2>
        </div>
        <div class="vscroll inner"><b class="up"></b><i class="thumb"></i><i class="groove"></i><b class="down"></b></div>
      </div>
    </section>
  </main>
  <footer class="status"><span class="coords">x: 159.928 mm&nbsp; y: 72.4853 mm&nbsp; page: 1</span><div class="combo zoom"><span>46.7%</span><b class="arrow"></b></div><div class="slider"><i></i></div><div class="corner"></div></footer>
</div>
<div class="behind"><span>7. Be sure to leave margins along the edges, and a space along the top for the title.</span></div>
<script src="rulers.js"></script>
</body>
</html>
```
FILE: styles.css
```css
* { box-sizing: border-box; }
body { margin: 0; width: 1538px; height: 820px; overflow: hidden; background: #b5b5b5; font: 13px "DejaVu Sans", sans-serif; color: #1a1a1a; }
.defs { position: absolute; }
svg { display: block; flex: none; }
.window { width: 1538px; height: 819px; border-right: 2px solid #7d7d7d; border-bottom: 1px solid #666; background: #efefef; display: flex; flex-direction: column; }
.title { height: 37px; width: 1538px; flex: none; background: #353535; border-top: 1px solid #505050; border-bottom: 1px solid #222; display: flex; align-items: center; padding: 0 11px 1px 0; color: #fff; }
.title-text { flex: 1; text-align: center; padding-left: 55px; font: bold 12.500px "Noto Sans", sans-serif; }
.minimize { width: 8px; height: 2px; background: #fff; margin: 7px 21px 0 0; }
.quit { width: 18px; height: 18px; }
.menu { height: 21px; flex: none; padding-left: 10px; display: flex; align-items: center; gap: 14.500px; }
.menu u { text-underline-offset: 2px; }
.toolbar { height: 39px; flex: none; display: flex; align-items: center; padding-left: 4px; border-top: 1px solid #d0d0d0; border-bottom: 1px solid #b0b0b0; background: linear-gradient(#fafafa, #ededed); }
.toolbar.lower { border-top: 0; padding-top: 2px; }
.ic { width: 33px; height: 24px; }
.ic.small { height: 20px; }
.off { opacity: .38; filter: grayscale(1); }
.pale { opacity: .55; }
.flip { transform: scaleX(-1); }
.grip { width: 5px; height: 17px; margin-right: 3.500px; background: radial-gradient(circle, #aaa .7px, transparent .8px) 0 0 / 2.500px 3px; }
.grip.second { margin: 0 4px 0 7.500px; }
.lower .grip.second { margin: 0 4px 0 8px; }
.sep { width: 6.850px; height: 20px; background: linear-gradient(#d0d0d0, #d0d0d0) 4px 0 / 1px 100% no-repeat; }
.combo { display: flex; border: 1px solid #aaa; border-radius: 2px; background: #fff; height: 25px; align-items: center; }
.combo span { flex: 1; padding-left: 3px; }
.combo .arrow { width: 20px; height: 100%; border-left: 1px solid #aaa; background: linear-gradient(#fff, #eee); }
.arrow { display: flex; align-items: center; justify-content: center; }
.arrow::after, .vscroll b::after, .mini::after { content: ""; border: 4px solid transparent; border-top-color: #555; border-bottom: 0; }
.arrow.upw::after, .vscroll .up::after { border: 4px solid transparent; border-bottom-color: #555; border-top: 0; }
.atlas { width: 84px; height: 30px; background: #eee; color: #b5b5b5; border-color: #b5b5b5; }
.atlas .arrow::after, .mini::after { border-top-color: #bbb; }
.mini { width: 12px; display: flex; }
.main { height: 652px; flex: none; display: flex; border-top: 1px solid #eee; }
.tools { width: 40px; height: 651px; border-right: 1px solid #b0b0b0; background: linear-gradient(90deg, #fafafa, #ededed); display: flex; flex-direction: column; align-items: center; }
.tools svg { width: 22px; height: 22px; margin: 5px 0; }
.tools svg.active { width: 32px; height: 31px; margin: .5px 0; padding: 4px; border: 1px solid #aaa; border-radius: 3px; background: #dcdcdc; }
.hgrip { width: 16px; height: 5px; margin: 5px 0 2px; background: radial-gradient(circle, #aaa .7px, transparent .8px) 0 0 / 3px 2.500px; }
.view { width: 1086px; height: 651px; display: grid; grid-template: 21px 630px / 21px 1065px; border-bottom: 1px solid #b0b0b0; }
.ruler-h { grid-column: 1 / 3; width: 1086px; height: 21px; }
.ruler-v { width: 21px; height: 629px; }
.tick { stroke: #333; shape-rendering: crispEdges; }
.cursor { stroke: #f00; shape-rendering: crispEdges; }
.ruler-label { font: 11px "DejaVu Sans", sans-serif; fill: #555; }
.canvas { position: relative; height: 629px; background: #d7d7d7; overflow: hidden; }
.sheet { position: absolute; left: 128px; top: 43px; width: 775px; height: 548px; background: #fff; box-shadow: 8px 9px #969696; }
.map { position: absolute; left: 294px; top: 167px; width: 602px; height: 419px; }
.selection { position: absolute; left: 296px; top: 172px; width: 598px; height: 411px; }
.map path { stroke-linejoin: round; }
.bright { fill: #5cb550; stroke: #3f5c3a; stroke-width: 2.500; }
.pale-green { fill: #75cb69; }
.sage { fill: #8ba87b; stroke: #45523f; stroke-width: 3; }
.river { fill: none; stroke: #65bd5a; stroke-width: 6; filter: drop-shadow(1px 1px 0 #3f5c3a) drop-shadow(-1px -1px 0 #3f5c3a); }
.dark { fill: #357a2d; stroke: #355533; stroke-width: 2.500; }
.purple { fill: #6257a5; stroke: #494957; stroke-width: 3; }
.red { fill: #d67964; stroke: #5d4a43; stroke-width: 2.500; }
.lit { fill: #f09782; }
.shade { mix-blend-mode: soft-light; opacity: .34; }
.vscroll { display: flex; flex-direction: column; width: 14px; border-left: 1px solid #b8b8b8; }
.vscroll b { height: 14px; flex: none; display: flex; align-items: center; justify-content: center; background: #fafafa; }
.groove { background: #e2e2e2; border: solid #b8b8b8; border-width: 1px 0; }
.thumb { background: linear-gradient(90deg, #fff, #eee); }
.outer { height: 651px; padding-top: 20px; border-bottom: 1px solid #b8b8b8; }
.outer .groove { height: 26px; }
.outer .thumb { flex: 1; }
.outer .down, .inner .down { border-top: 1px solid #b8b8b8; }
.split { width: 6px; height: 651px; background: radial-gradient(circle, #aaa .6px, transparent .7px) 1px 0 / 3px 3px repeat-y; clip-path: inset(318px 0 316px 0); }
.panel { width: 390px; height: 651px; display: flex; flex-direction: column; }
.tabs { height: 28px; flex: none; display: flex; align-items: flex-end; border-bottom: 1px solid #b0b0b0; }
.tab { display: flex; align-items: center; justify-content: center; height: 25px; border: 1px solid #b0b0b0; border-left-width: 0; border-radius: 2px 2px 0 0; border-bottom: 0; background: #dcdcdc; }
.tab.on { height: 28px; margin-bottom: -1px; border-left-width: 1px; background: linear-gradient(#fcfcfc, #efefef); }
.t1 { width: 61.500px; padding-right: 1px; } .t2 { width: 108px; } .t3 { width: 69px; border-left-width: 1px; } .t4 { width: 124.500px; } .t5 { width: 68px; }
.dock { height: 20px; flex: none; display: flex; align-items: center; gap: 3px; padding: 1px 2px 0 4px; }
.dock span { flex: 1; }
.dock svg { width: 11px; height: 11px; }
.tree { height: 155px; flex: none; background: #fff; border: 1px solid #b0b0b0; }
.row { height: 20px; display: grid; grid-template-columns: 31px 32px 1fr; align-items: center; }
.row.body { height: 17px; grid-template-columns: 32px 32px 1fr; }
.row > span { padding-left: 3px; display: flex; align-items: center; }
.head { height: 21px; border-bottom: 1px solid #b0b0b0; background: linear-gradient(#fff, #ebebeb); }
.head > span { height: 100%; }
.head > span + span { border-left: 1px solid #ccc; padding-left: 2px; }
.eye16 { width: 15px; height: 15px; color: #888; }
.lock16 { width: 15px; height: 16px; margin-left: 1px; }
.box { width: 14px; height: 14px; border: 1px solid #b5b5b5; background: #fff; flex: none; }
.name svg { width: 15px; height: 15px; margin: 0 6px 0 1px; }
.name strong { color: #000; }
.hsplit { height: 6px; flex: none; background: radial-gradient(circle, #aaa .6px, transparent .7px) 187px 1px / 3px 3px; clip-path: inset(1px 186px 2px 187px); }
.band { height: 21px; flex: none; background: #c6c6c6; color: #000; font-weight: bold; padding: 2px 6px; margin-top: 1px; line-height: 15px; }
.mapbar { height: 30px; flex: none; display: flex; align-items: center; padding: 0 0 2px 8px; gap: 9.200px; }
.mapbar svg { width: 16px; height: 16px; }
.mapbar i { width: 1px; height: 12px; background: #ccc; margin: 0 -3px 0 -.6px; }
.props { flex: 1; min-height: 0; display: flex; border: 1px solid #b0b0b0; }
.form { width: 374px; padding: 13px 10px 0 13px; overflow: hidden; }
.form h2 { margin: 0; height: 16px; font: bold 13px/16px "DejaVu Sans", sans-serif; color: #111; display: flex; align-items: center; gap: 8px; }
.form h2::before { content: ""; border: 6px solid transparent; border-top: 7px solid #333; border-bottom: 0; }
.group { border: 1px solid #d8d8d8; border-radius: 2px; background: #ebebeb; width: 351px; padding: 12px 17px 0 12px; margin: 3px 0 8px -1px; }
.main-group { height: 146px; padding-top: 12.500px; }
.layer-group { height: 114px; padding-right: 20.500px; }
.line { height: 25px; margin-bottom: 7.200px; display: flex; align-items: center; }
.line label { width: 89px; white-space: nowrap; flex: none; }
.field { width: 199px; height: 25px; background: #fff; border: 1px solid #aaa; border-radius: 2px; padding: 3px 3px; line-height: 17px; color: #000; flex: none; }
.spin { display: flex; padding: 0 0 0 5px; align-items: center; justify-content: space-between; }
.spin span { width: 14px; height: 100%; display: flex; flex-direction: column; justify-content: space-evenly; border-left: 1px solid #aaa; }
.select { width: 170px; height: 25px; border: 1px solid #aaa; border-radius: 2px; background: linear-gradient(#fdfdfd, #eaeaea); display: flex; align-items: center; justify-content: space-between; padding: 0 6px 0 4px; flex: none; }
.theme { width: 136px; }
.btn { width: 24px; height: 24px; border: 1px solid #aaa; border-radius: 2px; background: linear-gradient(#fdfdfd, #eaeaea); margin-left: 5px; display: grid; place-items: center; color: #6898ca; flex: none; }
.btn svg { width: 16px; height: 16px; }
.dd { width: 24px; height: 18px; margin: 0 -3px 0 8.500px; }
.line .box { margin-right: 5px; }
.check { height: 21px; }
.grow { flex: 1; }
.layer-group .line:nth-child(2) { height: 24px; }
.disabled { color: #bebebe; height: 24px; }
.disabled .box { background: #ebebeb; }
.inner .thumb { height: 95px; }
.inner .groove { flex: 1; border-bottom: 0; }
.status { height: 30px; display: flex; align-items: center; justify-content: flex-end; color: #111; }
.coords { margin-right: 57.500px; word-spacing: -.4px; }
.zoom { width: 134px; }
.slider { width: 98px; height: 5px; margin: 0 12px 0 8px; border: 1px solid #aaa; border-radius: 3px; background: linear-gradient(90deg, #3da0dd 4px, #d7d7d7 4px); display: flex; align-items: center; padding-left: 2px; }
.slider i { width: 13px; height: 13px; border: 1px solid #aaa; border-radius: 3px; background: #fff; flex: none; }
.corner { width: 13px; height: 12px; align-self: flex-end; background: radial-gradient(circle, #aaa .6px, transparent .7px) 0 0 / 3px 3px; clip-path: polygon(100% 0, 100% 100%, 0 100%); }
.behind { height: 1px; overflow: hidden; padding-left: 168px; line-height: 12px; color: #222; white-space: nowrap; }
.behind span { display: block; margin-top: -4px; font-size: 13.700px; }
```
FILE: rulers.js
```js
const NS = "http://www.w3.org/2000/svg";
const STEP = 13.03; // pixels for 5 mm at the current zoom

function add(parent, name, attrs, text) {
  const el = document.createElementNS(NS, name);
  for (const key in attrs) el.setAttribute(key, attrs[key]);
  if (text !== undefined) el.textContent = text;
  parent.appendChild(el);
}

const h = document.getElementById("rulerH");
for (let i = -9; i <= 71; i++) {
  const x = Math.floor(189.4 + i * STEP) + 0.5;
  const len = i % 10 === 0 ? 21 : i % 5 === 0 ? 7 : 5;
  add(h, "path", { d: `M${x} 158v-${len}`, class: "tick" });
  if (i % 10 === 0) add(h, "text", { x: x + 1.5, y: 149, class: "ruler-label" }, i * 5);
}
add(h, "path", { d: "M606.5 137v21", class: "cursor" });

const v = document.getElementById("rulerV");
for (let i = -3; i <= 44; i++) {
  const y = Math.floor(201.3 + i * STEP) + 0.5;
  const len = i % 10 === 0 ? 21 : i % 5 === 0 ? 7 : 5;
  add(v, "path", { d: `M61 ${y}h-${len}`, class: "tick" });
  if (i % 10 === 0) add(v, "text", { transform: `translate(52 ${y + 3}) rotate(-90)`, "text-anchor": "end", class: "ruler-label" }, i * 5);
}
add(v, "path", { d: "M40 390.5h21", class: "cursor" });
```
